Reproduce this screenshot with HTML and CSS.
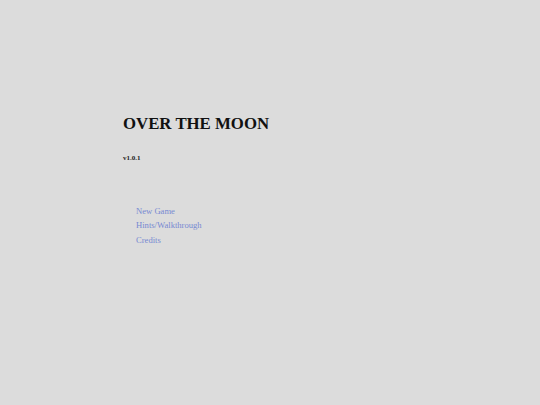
FILE: index.html
```html
<!DOCTYPE html>
<html>
<head>
<meta charset="utf-8">
<link rel="stylesheet" href="styles.css">
</head>
<body>
<main class="screen">
  <h1 class="title">OVER THE MOON</h1>
  <div class="version">v1.0.1</div>
  <ul class="menu">
    <li><a class="menu-link" href="#">New Game</a></li>
    <li><a class="menu-link" href="#">Hints/Walkthrough</a></li>
    <li><a class="menu-link" href="#">Credits</a></li>
  </ul>
</main>
</body>
</html>
```
FILE: styles.css
```css
html, body {
  margin: 0;
  padding: 0;
  background: #dcdcdc;
  width: 540px;
  height: 405px;
  overflow: hidden;
  font-family: "Liberation Serif", "Times New Roman", serif;
}
.screen {
  padding: 113px 0 0 123px;
}
.title {
  margin: 0;
  font-size: 16.8px;
  font-weight: bold;
  color: #111;
  line-height: 22px;
}
.version {
  margin-top: 18px;
  font-size: 7px;
  font-weight: bold;
  color: #222;
  line-height: 10px;
}
.menu {
  list-style: none;
  margin: 40.5px 0 0 13px;
  padding: 0;
}
.menu li {
  font-size: 8.6px;
  line-height: 14.7px;
}
.menu-link {
  color: #7789d2;
  text-decoration: none;
}
```
